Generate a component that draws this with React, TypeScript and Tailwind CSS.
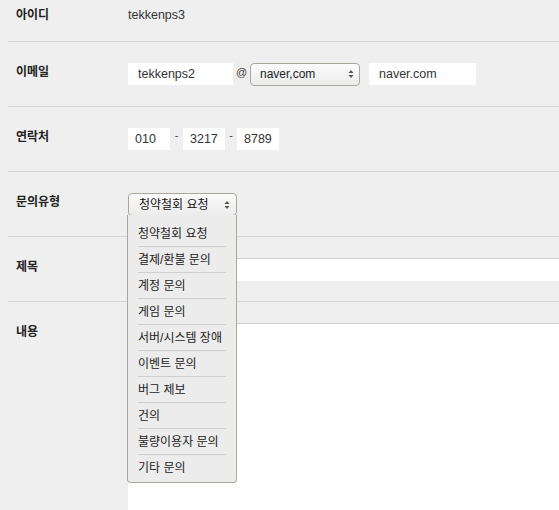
const font = "font-['Liberation_Sans','Noto_Sans_CJK_KR',sans-serif]";

const options = [
  "청약철회 요청",
  "결제/환불 문의",
  "계정 문의",
  "게임 문의",
  "서버/시스템 장애",
  "이벤트 문의",
  "버그 제보",
  "건의",
  "불량이용자 문의",
  "기타 문의",
];

function Arrows() {
  return (
    <svg width="6" height="10" viewBox="0 0 6 10" className="shrink-0">
      <path d="M3 1 L5.5 4 H0.5 Z" fill="#555" />
      <path d="M3 9 L5.5 6 H0.5 Z" fill="#555" />
    </svg>
  );
}

function Label({ children }: { children: React.ReactNode }) {
  return (
    <div className="w-[120px] shrink-0 pl-2 pt-[22px] text-[12px] leading-[16px] font-semibold text-[#222]">
      {children}
    </div>
  );
}

function Box({ w, children, pl = "pl-[10px]" }: { w: string; children: React.ReactNode; pl?: string }) {
  return (
    <div className={`${w} ${pl} h-[22px] bg-white text-[12.5px] leading-[22px] text-[#333]`}>
      {children}
    </div>
  );
}

export default function App() {
  return (
    <div className={`${font} w-[559px] h-[510px] overflow-hidden bg-[#efefef] pl-2`}>
      {/* 아이디 */}
      <div className="flex h-[42px] border-b border-[#d5d5d5]">
        <div className="w-[120px] shrink-0 pl-2 pt-[7px] text-[12px] leading-[16px] font-semibold text-[#222]">
          아이디
        </div>
        <div className="pt-[7px] text-[12.5px] leading-[16px] text-[#333]">tekkenps3</div>
      </div>

      {/* 이메일 */}
      <div className="flex h-[65px] border-b border-[#d5d5d5]">
        <Label>이메일</Label>
        <div className="flex items-center pt-[21px] h-[43px]">
          <Box w="w-[105px]">tekkenps2</Box>
          <span className="w-[17px] text-center text-[11px] leading-[16px] text-[#444] -mt-1">@</span>
          <div className="flex h-[23px] w-[110px] items-center justify-between rounded-[4px] border border-[#aaa79a] bg-gradient-to-b from-[#fbfbfb] to-[#ececec] pl-[9px] pr-[5px] text-[12px] text-[#222]">
            <span>naver,com</span>
            <Arrows />
          </div>
          <div className="ml-[9px]">
            <Box w="w-[107px]">naver.com</Box>
          </div>
        </div>
      </div>

      {/* 연락처 */}
      <div className="flex h-[65px] border-b border-[#d5d5d5]">
        <Label>연락처</Label>
        <div className="flex items-center pt-[21px] h-[43px]">
          <Box w="w-[42px]" pl="pl-[7px]">010</Box>
          <span className="w-[13px] text-center text-[11px] leading-[10px] text-[#444] -mt-2">-</span>
          <Box w="w-[42px]" pl="pl-[7px]">3217</Box>
          <span className="w-[12px] text-center text-[11px] leading-[10px] text-[#444] -mt-2">-</span>
          <Box w="w-[42px]" pl="pl-[7px]">8789</Box>
        </div>
      </div>

      {/* 문의유형 */}
      <div className="flex h-[65px] border-b border-[#d5d5d5]">
        <Label>문의유형</Label>
        <div className="relative pt-[21px]">
          <div className="flex h-[23px] w-[109px] items-center justify-between rounded-[4px] border border-[#aaa79a] bg-gradient-to-b from-[#fbfbfb] to-[#ececec] pl-[10px] pr-[6px] text-[12px] text-[#111]">
            <span>청약철회 요청</span>
            <Arrows />
          </div>
          <div className="absolute left-[-1px] top-[43px] z-10 w-[110px] rounded-b-[4px] border border-t-0 border-[#aaa79a] bg-[#ececec] pt-[6px] pb-[1px]">
            {options.map((o, i) => (
              <div key={o} className="px-[10px]">
                <div
                  className={`h-[26px] text-[12px] leading-[26px] text-[#222] ${
                    i < options.length - 1 ? "border-b border-[#cfcfcf]" : ""
                  }`}
                >
                  {o}
                </div>
              </div>
            ))}
          </div>
        </div>
      </div>

      {/* 제목 */}
      <div className="flex h-[65px] border-b border-[#d5d5d5]">
        <Label>제목</Label>
        <div className="flex-1 pt-[21px]">
          <div className="h-[23px] border-t border-[#cfcfcf] bg-white" />
        </div>
      </div>

      {/* 내용 */}
      <div className="flex h-[210px]">
        <Label>내용</Label>
        <div className="flex-1 pt-[21px]">
          <div className="h-full border-t border-[#cfcfcf] bg-white" />
        </div>
      </div>
    </div>
  );
}
